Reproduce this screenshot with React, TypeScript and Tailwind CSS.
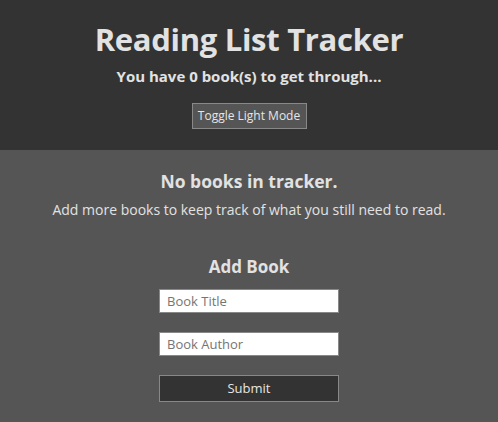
import { useState } from "react";

export default function App() {
  const [title, setTitle] = useState("");
  const [author, setAuthor] = useState("");

  return (
    <div className="min-h-[422px] bg-[#555555] font-['Open_Sans',sans-serif] text-[#e2e2e2]">
      <header className="flex h-[150px] flex-col items-center bg-[#333333] pt-[19px]">
        <h1 className="text-[31px] font-bold leading-[40px] tracking-[-0.3px]">
          Reading List Tracker
        </h1>
        <p className="mt-[6px] text-[15px] font-bold leading-[22px]">
          You have 0 book(s) to get through...
        </p>
        <button className="mt-[16px] h-[26px] w-[115px] border border-[#888] bg-[#555555] text-[12px] leading-none text-[#e6e6e6]">
          Toggle Light Mode
        </button>
      </header>

      <main className="flex flex-col items-center pt-[19px]">
        <h2 className="text-[17.5px] font-bold leading-[24px]">No books in tracker.</h2>
        <p className="mt-[6px] text-[14px] leading-[21px]">
          Add more books to keep track of what you still need to read.
        </p>

        <h2 className="mt-[35px] text-[17px] font-bold leading-[24px]">Add Book</h2>
        <form
          className="mt-[10px] flex w-[180px] flex-col"
          onSubmit={(e) => e.preventDefault()}
        >
          <input
            value={title}
            onChange={(e) => setTitle(e.target.value)}
            placeholder="Book Title"
            className="h-[24px] border border-[#888] bg-white px-[7px] text-[13px] text-[#333] outline-none placeholder:text-[#757575]"
          />
          <input
            value={author}
            onChange={(e) => setAuthor(e.target.value)}
            placeholder="Book Author"
            className="mt-[19px] h-[24px] border border-[#888] bg-white px-[7px] text-[13px] text-[#333] outline-none placeholder:text-[#757575]"
          />
          <button
            type="submit"
            className="mt-[19px] h-[27px] border border-[#888] bg-[#333333] text-[13px] text-[#e6e6e6]"
          >
            Submit
          </button>
        </form>
      </main>
    </div>
  );
}
